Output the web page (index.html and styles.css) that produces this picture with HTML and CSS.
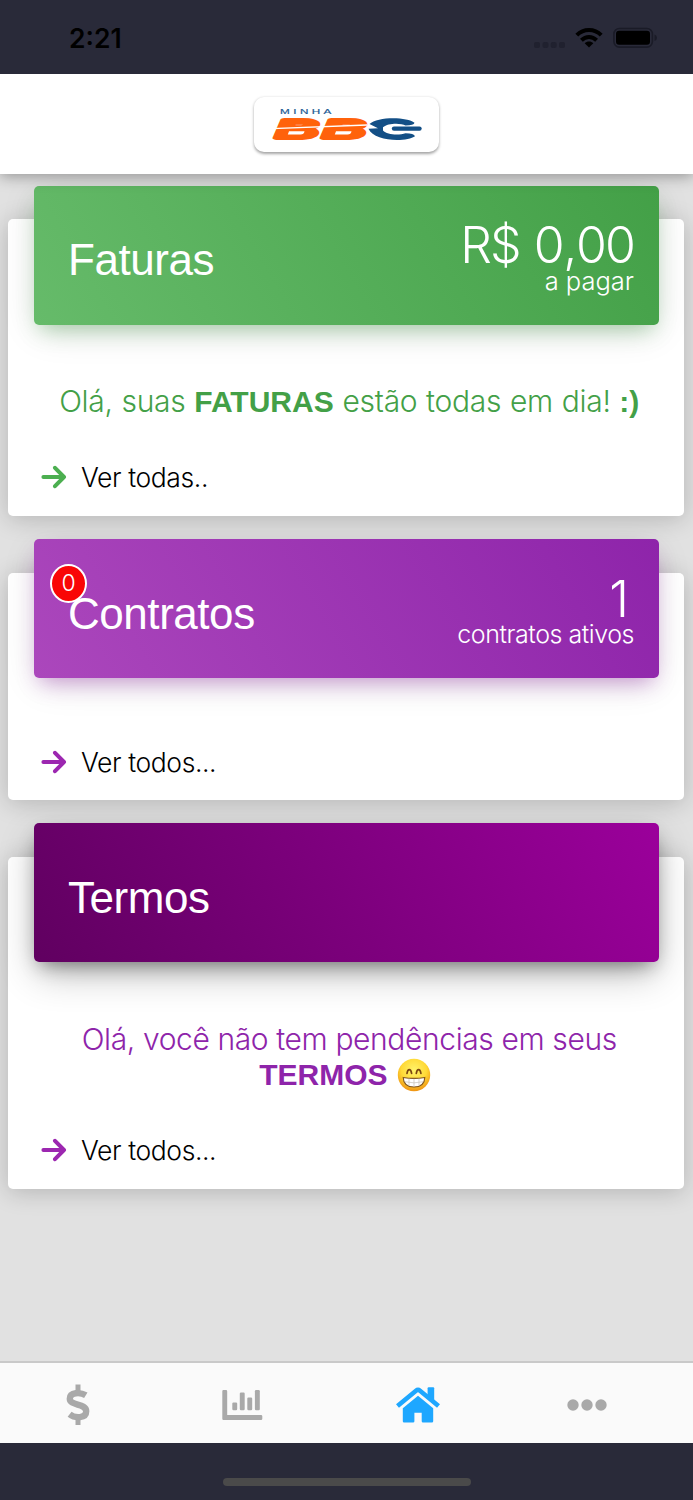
FILE: index.html
```html
<!DOCTYPE html>
<html lang="pt-BR">
<head>
<meta charset="utf-8">
<title>Minha BBG</title>
<link rel="stylesheet" href="styles.css">
</head>
<body>
<div class="phone">
  <div class="status">
    <span class="time">2:21</span>
    <svg class="status-icons" width="126" height="24" viewBox="0 0 126 24">
      <g fill="#20212f"><rect x="1" y="16" width="6" height="6" rx="2"/><rect x="9.500" y="16" width="6" height="6" rx="2"/><rect x="17.700" y="16" width="6" height="6" rx="2"/><rect x="26" y="16" width="6" height="6" rx="2"/></g>
      <g fill="none" stroke="#000" stroke-width="4"><path d="M43.800 9.200C50.500 2.300 61.500 2.300 68.200 9.200"/><path d="M48.400 14.200C52.800 9.900 59.200 9.900 63.600 14.200"/></g>
      <path d="M56 21.600l-4.300-4.300c2.300-2.300 6.300-2.300 8.600 0z"/>
      <rect x="80.900" y="2.500" width="38.500" height="18.600" rx="5.500" fill="none" stroke="#1a1b27" stroke-width="1.600"/>
      <rect x="83" y="4.800" width="34" height="14" rx="3"/>
      <path d="M121.500 8.500q2.500.8 2.500 3.300t-2.500 3.300z" fill="#1a1b27"/>
    </svg>
  </div>
  <header class="topbar">
    <div class="logo">
      <svg width="184" height="54" viewBox="0 0 184 54">
        <text x="14.500" y="17.200" transform="scale(1.8 1)" class="logo-small" textLength="28.500" lengthAdjust="spacing">MINHA</text>
        <text x="22" y="40.800" class="logo-big" textLength="42" lengthAdjust="spacingAndGlyphs">B</text>
        <text x="69" y="40.800" class="logo-big" textLength="42" lengthAdjust="spacingAndGlyphs">B</text>
        <path d="M18 31.700L113 28" stroke="#fff" stroke-width="1.300"/>
        <path d="M35 34.300h15.500q-.5 3.200-4 3.200H33.800zM82 34.300h15.500q-.5 3.200-4 3.200H80.800z" fill="#fff"/>
        <path d="M115.500 27C123 19.500 153 19.500 160.500 25.800Q160 28.500 151.500 28.600C147 25.800 134 25.800 129 30.300V33.500C133 38.300 146 38.300 151.500 36.200Q160 36.300 161 39.200C153 45 120 45 114.500 31.800L124 31.300z" fill="#134f86"/>
        <path d="M140 31.600h25.500" stroke="#134f86" stroke-width="4.400" stroke-linecap="round"/>
      </svg>
    </div>
  </header>
  <main class="content">
    <section class="card">
      <div class="banner green">
        <h2>Faturas</h2>
        <div class="summary"><span class="value amount">R$ 0<span class="comma">,</span>00</span><span class="label pay">a pagar</span></div>
      </div>
      <p class="message green-text">Olá, suas <b class="word">FATURAS</b> estão todas em dia! <b>:)</b></p>
      <a class="more green-link"><svg width="26" height="24" viewBox="0 0 26 24"><path d="M2.400 12H23M14 2.800L23 12L14 21.200"/></svg><span>Ver todas..</span></a>
    </section>
    <section class="card">
      <div class="banner purple">
        <h2>Contratos</h2><span class="badge">0</span>
        <div class="summary"><span class="value one">1</span><span class="label active">contratos ativos</span></div>
      </div>
      <a class="more"><svg width="26" height="24" viewBox="0 0 26 24"><path d="M2.400 12H23M14 2.800L23 12L14 21.200"/></svg><span>Ver todos...</span></a>
    </section>
    <section class="card">
      <div class="banner dark"><h2>Termos</h2></div>
      <p class="message terms">Olá, você não tem pendências em seus<br><span class="second"><b class="word">TERMOS</b>
        <svg class="emoji" width="34" height="34" viewBox="0 0 34 34">
          <defs><radialGradient id="face" cx=".5" cy=".35" r=".65"><stop offset="0" stop-color="#fff36b"/><stop offset=".6" stop-color="#ffd936"/><stop offset="1" stop-color="#ef9312"/></radialGradient></defs>
          <circle cx="17" cy="17" r="16.200" fill="url(#face)"/>
          <path d="M10 15.300q.6-3.700 2.300-3.700t2.300 3.700M19.300 15.300q.6-3.700 2.300-3.700t2.300 3.700" fill="none" stroke="#7a4510" stroke-width="1.700" stroke-linecap="round"/>
          <path d="M6.200 19.500Q17 21.200 27.800 19.500Q27.500 29 17 29T6.200 19.500z" fill="#fff" stroke="#80531b" stroke-width="1.100"/>
          <path d="M7.500 23.700Q17 26 26.500 23.700M12 20.500v7.300M17 20.700v8M22 20.500v7.300" fill="none" stroke="#c5c0b6" stroke-width=".7"/>
        </svg></span></p>
      <a class="more"><svg width="26" height="24" viewBox="0 0 26 24"><path d="M2.400 12H23M14 2.800L23 12L14 21.200"/></svg><span>Ver todos...</span></a>
    </section>
  </main>
  <nav class="tabs">
    <svg class="dollar" width="26" height="42" viewBox="0 0 26 42"><path d="M13 3v6M13 33v5.500" stroke-width="5" stroke-linecap="square" stroke-linejoin="round"/><path d="M20.800 11.300C15.500 8 4.800 8 4.800 14.700C4.800 22.300 21.200 18.800 21.200 27.200C21.200 34.500 10 34.500 4.600 30.300" stroke-width="6.400"/></svg>
    <svg class="chart" width="42" height="34" viewBox="0 0 42 34"><path d="M1.500 2H4q1.200 0 1.200 1.200V27H39q1.300 0 1.300 1.200v2.600Q40.300 32 39 32H1.500Q.3 32 .3 30.800V3.200Q.3 2 1.500 2z"/><rect x="10.300" y="14.600" width="4.900" height="7.600" rx="1.200"/><rect x="17.800" y="4.600" width="4.900" height="17.600" rx="1.200"/><rect x="25.300" y="9.600" width="4.900" height="12.600" rx="1.200"/><rect x="32.900" y="2" width="4.900" height="20.200" rx="1.200"/></svg>
    <svg class="home" width="46" height="38" viewBox="0 0 46 38"><path d="M32.600 2.300q0-1 1-1h4.600q1 0 1 1v12.200l-6.600-5.500z"/><path d="M2.500 20L21 4.700q2-1.600 4 0L43.500 20" fill="none" stroke="#1ea7ff" stroke-width="4.600"/><path d="M7.800 22.300L23 9.700l15.200 12.600v13q0 1.300-1.300 1.300H28q-1.300 0-1.300-1.300v-8.600h-7.300v8.600q0 1.300-1.300 1.300H9.100q-1.300 0-1.300-1.300z"/></svg>
    <svg class="dots" width="40" height="14" viewBox="0 0 40 14"><circle cx="6" cy="7" r="5.700"/><circle cx="20" cy="7" r="5.700"/><circle cx="34" cy="7" r="5.700"/></svg>
  </nav>
  <div class="bottom"><span class="handle"></span></div>
</div>
</body>
</html>
```
FILE: styles.css
```css
* { box-sizing: border-box; }
body { margin: 0; font-family: Inter, "Liberation Sans", sans-serif; }
.phone { width: 693px; height: 1500px; display: flex; flex-direction: column; background: #e1e1e1; overflow: hidden; }
.status { height: 74px; flex: none; background: #292a39; display: flex; justify-content: space-between; padding: 22px 34px 0 69px; position: relative; z-index: 2; }
.time { font-size: 26.5px; line-height: 32px; font-weight: 600; letter-spacing: 0; }
.status-icons { margin-top: 4px; }
.topbar { height: 100px; flex: none; background: #fff; display: flex; justify-content: center; padding: 22.500px 0 0; box-shadow: 0 2px 14px rgba(0,0,0,.36); position: relative; z-index: 1; }
.logo { width: 185px; height: 55px; border-radius: 10px; background: #fff; box-shadow: 0 1.500px 3px rgba(0,0,0,.36); }
.logo svg { display: block; }
.logo-small { font: 6.500px "Liberation Sans", sans-serif; fill: #1b5a92; stroke: #1b5a92; stroke-width: .150px; }
.logo-big { font: italic bold 25px "Liberation Sans", sans-serif; fill: #ff620b; stroke: #ff620b; stroke-width: 3.800px; stroke-linejoin: round; }
.content { flex: 1; padding: 45.200px 9px 0 8.400px; display: flex; flex-direction: column; gap: 56.800px; }
.card { background: #fff; border-radius: 5px; padding: 0 25px 22.600px 25.600px; box-shadow: 0 3px 24px rgba(0,0,0,.2); }
.banner { height: 139px; margin-top: -33.500px; border-radius: 5px; color: #fff; padding: 7px 25px 0 34px; display: flex; align-items: center; justify-content: space-between; position: relative; }
.green { background: linear-gradient(60deg, #66bb6a, #43a047); box-shadow: 0 8px 38px -4px rgba(0,0,0,.14), 0 10px 20px -6px rgba(76,175,80,.42); }
.purple { background: linear-gradient(60deg, #ab47bc, #8e24aa); box-shadow: 0 8px 38px -4px rgba(0,0,0,.12), 0 10px 20px -6px rgba(156,39,176,.42); }
.dark { background: linear-gradient(60deg, #600060, #9b009b); box-shadow: 0 14px 38px -4px rgba(0,0,0,.3), 0 8px 18px -6px rgba(0,0,0,.44); }
h2 { margin: 0; padding-top: 3px; font: 400 44px/50px "Liberation Sans", sans-serif; letter-spacing: -.450px; }
.summary { display: flex; flex-direction: column; align-items: flex-end; font-weight: 300; white-space: nowrap; }
.value { font-size: 50px; line-height: 44px; }
.amount { letter-spacing: -1.900px; word-spacing: 2px; }
.comma { padding: 0 .500px; }
.one { padding-right: 5px; }
.label { font-size: 25.500px; line-height: 27px; }
.active { font-size: 25px; letter-spacing: -.450px; }
.badge { position: absolute; left: 16px; top: 25px; width: 37px; height: 39px; border: 2px solid #fff; border-radius: 50%; background: #f90606; font-size: 23px; line-height: 35px; text-align: center; font-weight: 300; }
.message { margin: 59.400px 0 0; font-size: 30px; line-height: 35px; font-weight: 300; text-align: center; white-space: nowrap; padding-left: 5.500px; height: 35px; }
.message b { font-family: "Liberation Sans", sans-serif; font-weight: 700; letter-spacing: 0; }
.green-text { color: #43a047; letter-spacing: -.280px; word-spacing: .600px; }
.terms { color: #8e24aa; letter-spacing: -.390px; height: 70px; }
.second { margin-right: 8px; }
.more { display: flex; align-items: center; height: 32px; margin-top: 42.100px; padding: 0 0 0 7px; gap: 14px; color: #000; font-size: 26.500px; line-height: 32px; font-weight: 300; letter-spacing: -.400px; }
.banner + .more { margin-top: 67.500px; }
.more svg { fill: none; stroke: #9c27b0; stroke-width: 4; stroke-linecap: round; stroke-linejoin: round; }
.green-link svg { stroke: #4caf50; }
.emoji { vertical-align: -5.500px; margin: -4px 0 -4px 1.500px; position: relative; top: -2px; }
.tabs { height: 81.500px; flex: none; background: #fafafa; border-top: 2px solid #c9c9c9; display: flex; align-items: center; padding: 5px 0 0 65px; position: relative; }
.tabs svg { fill: #a9a9a9; flex: none; }
.dollar { stroke: #a9a9a9; }
.tabs .dollar { fill: none; }
.chart { margin-left: 131px; }
.tabs .home { fill: #1ea7ff; margin-left: 131px; }
.dots { margin-left: 126.300px; }
.bottom { height: 57.500px; flex: none; background: #292a39; display: flex; justify-content: center; align-items: flex-start; padding-top: 35.500px; }
.handle { width: 248px; height: 8px; border-radius: 4px; background: #4a4a4a; }
```
